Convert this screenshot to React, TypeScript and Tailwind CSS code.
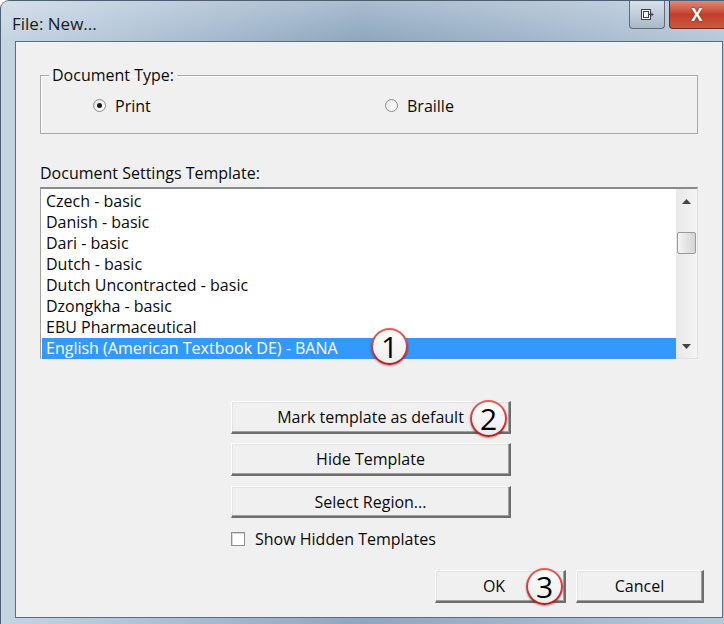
import React from "react";

const templates = [
  "Czech - basic",
  "Danish - basic",
  "Dari - basic",
  "Dutch - basic",
  "Dutch Uncontracted - basic",
  "Dzongkha - basic",
  "EBU Pharmaceutical",
  "English (American Textbook DE) - BANA",
];

function Callout({ n, className }: { n: number; className: string }) {
  return (
    <div
      className={
        "absolute w-[37px] h-[37px] rounded-full bg-gradient-to-b from-[#f15a5a] to-[#b81818] p-[2px] shadow-[0_1px_2px_rgba(0,0,0,0.4)] " +
        className
      }
    >
      <div className="w-full h-full rounded-full bg-gradient-to-b from-white to-[#ececec] flex items-center justify-center text-[30px] leading-none text-black">
        {n}
      </div>
    </div>
  );
}

function WinButton({
  children,
  className,
}: {
  children: React.ReactNode;
  className: string;
}) {
  return (
    <div
      className={
        "relative flex items-center justify-center bg-[#f0f0f0] border-t border-l border-t-white border-l-white border-r-2 border-b-2 border-r-[#6d6d6d] border-b-[#6d6d6d] shadow-[inset_-1px_-1px_0_#a0a0a0,inset_1px_1px_0_#e3e3e3] text-[16px] text-[#0a0a0a] " +
        className
      }
    >
      {children}
    </div>
  );
}

export default function App() {
  return (
    <div
      className="w-[724px] h-[624px] overflow-hidden bg-white"
      style={{ fontFamily: '"Open Sans", "Noto Sans", "Liberation Sans", sans-serif' }}
    >
      <div className="w-[724px] h-[624px] rounded-tl-[9px] border-l border-t border-[#4d5f72] bg-gradient-to-r from-[#c6d5e4] via-[#8ea6be] to-[#b7c8d9] flex flex-col">
        {/* title bar */}
        <div className="h-[40px] flex justify-between bg-gradient-to-b from-[rgba(255,255,255,0.25)] to-transparent">
          <div className="pl-[11px] pt-[11px] text-[17px] leading-[24px] text-[#1b1b1b]">File: New...</div>
          <div className="flex items-start gap-[4px]">
            <div className="w-[36px] h-[28px] rounded-b-[4px] border border-t-0 border-[#5d6b7a] bg-gradient-to-b from-[#d9e2eb] to-[#a8b8c8] flex items-center justify-center">
              <svg width="14" height="13" viewBox="0 0 14 13">
                <rect x="1.5" y="1.5" width="9" height="10" fill="#f2f4f6" stroke="#3b4450" />
                <rect x="3.5" y="3.5" width="5" height="6" fill="none" stroke="#3b4450" />
                <path d="M8 6.5h5M11 4.5l2 2-2 2" fill="none" stroke="#3b4450" />
              </svg>
            </div>
            <div className="w-[55px] h-[28px] rounded-bl-[4px] border border-t-0 border-r-0 border-[#6b2a22] bg-gradient-to-b from-[#e0897a] via-[#c23e2a] to-[#cf5640] flex items-center justify-center">
              <span className="text-white font-bold text-[17px] leading-none [text-shadow:0_0_2px_#5a1a10]">X</span>
            </div>
          </div>
        </div>

        {/* client area */}
        <div className="flex-1 ml-[14px] mr-[1px] mb-[6px] border border-[#5c6d80] bg-[#f0f0f0] pl-[24px] pt-[22px] relative">
          <fieldset className="w-[658px] h-[70px] border border-[#a9a9a9] shadow-[inset_1px_1px_0_#fff] px-0">
            <legend className="ml-[8px] px-[3px] text-[16px] leading-[22px] text-[#0a0a0a]">Document Type:</legend>
            <div className="flex items-center h-[38px] pt-[1px]">
              <div className="ml-[52px] flex items-center gap-[9px] w-[292px]">
                <span className="w-[13px] h-[13px] rounded-full border border-[#8a8a8a] bg-gradient-to-br from-[#e6e6e6] to-white flex items-center justify-center">
                  <span className="w-[5px] h-[5px] rounded-full bg-[#1a1a1a]" />
                </span>
                <span className="text-[16px] text-[#0a0a0a]">Print</span>
              </div>
              <div className="flex items-center gap-[9px]">
                <span className="w-[13px] h-[13px] rounded-full border border-[#8a8a8a] bg-gradient-to-br from-[#e6e6e6] to-white" />
                <span className="text-[16px] text-[#0a0a0a]">Braille</span>
              </div>
            </div>
          </fieldset>

          <div className="mt-[28px] text-[16px] leading-[22px] text-[#0a0a0a]">Document Settings Template:</div>

          <div className="relative mt-[3px] w-[658px] h-[172px] border-t-2 border-l border-r border-b border-t-[#8a8a8a] border-l-[#a0a0a0] border-r-[#e0e0e0] border-b-[#e0e0e0] bg-white flex">
            <div className="flex-1 pt-[2px] pl-[1px]">
              {templates.map((t, i) => (
                <div
                  key={t}
                  className={
                    "h-[21px] leading-[21px] pl-[4px] text-[16px] " +
                    (i === templates.length - 1 ? "bg-[#3399ff] text-white" : "text-[#0a0a0a]")
                  }
                >
                  {t}
                </div>
              ))}
            </div>
            <div className="w-[21px] bg-gradient-to-r from-[#e8e8e8] to-[#f4f4f4] flex flex-col items-center">
              <div className="h-[24px] flex items-center justify-center">
                <svg width="9" height="5" viewBox="0 0 9 5">
                  <path d="M4.5 0L9 5H0Z" fill="#444" />
                </svg>
              </div>
              <div className="mt-[19px] w-[19px] h-[22px] rounded-[2px] border border-[#9a9a9a] bg-gradient-to-r from-[#f4f4f4] to-[#d4d4d4]" />
              <div className="flex-1" />
              <div className="h-[24px] flex items-center justify-center">
                <svg width="9" height="5" viewBox="0 0 9 5">
                  <path d="M0 0H9L4.5 5Z" fill="#444" />
                </svg>
              </div>
            </div>
            <Callout n={1} className="left-[330px] top-[139px]" />
          </div>

          <div className="ml-[191px] mt-[42px] flex flex-col w-[280px]">
            <WinButton className="h-[33px]">
              Mark template as default
              <Callout n={2} className="left-[238px] top-[-2px]" />
            </WinButton>
            <WinButton className="h-[33px] mt-[9px]">Hide Template</WinButton>
            <WinButton className="h-[32px] mt-[10px]">Select Region...</WinButton>
            <div className="mt-[10px] h-[22px] flex items-center gap-[10px]">
              <span className="w-[14px] h-[14px] border border-[#8e8f8f] bg-white shadow-[inset_1px_1px_0_#d8d8d8]" />
              <span className="text-[16px] text-[#0a0a0a]">Show Hidden Templates</span>
            </div>
          </div>

          <div className="ml-[395px] mt-[20px] flex gap-[10px]">
            <WinButton className="w-[131px] h-[33px]">
              <span className="mr-[12px]">OK</span>
              <Callout n={3} className="left-[90px] top-[-3px]" />
            </WinButton>
            <WinButton className="w-[128px] h-[33px]">Cancel</WinButton>
          </div>
        </div>
      </div>
    </div>
  );
}
